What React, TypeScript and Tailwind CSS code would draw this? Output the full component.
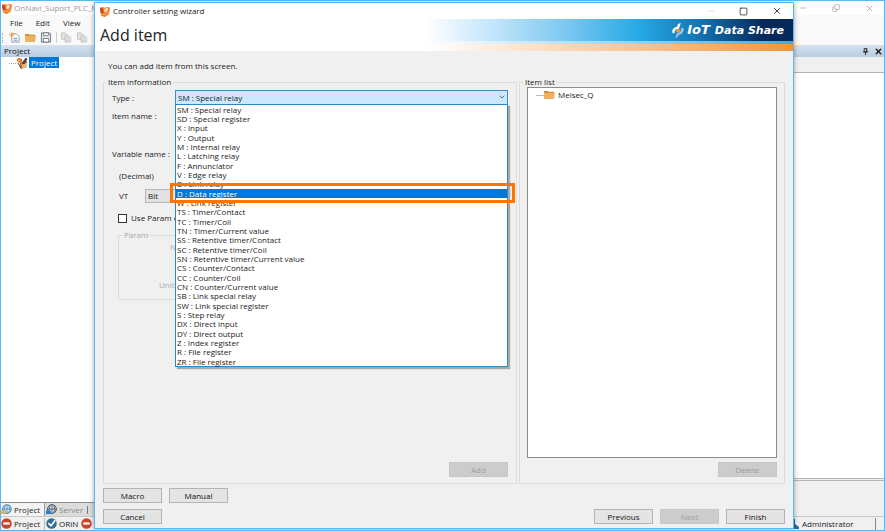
import { useState } from 'react';
import type { ReactNode } from 'react';
import { ChevronDown, Copy, Minus, Square, X } from 'lucide-react';

const ITEM_TYPES = [
  'SM : Special relay',
  'SD : Special register',
  'X : Input',
  'Y : Output',
  'M : Internal relay',
  'L : Latching relay',
  'F : Annunciator',
  'V : Edge relay',
  'B : Link relay',
  'D : Data register',
  'W : Link register',
  'TS : Timer/Contact',
  'TC : Timer/Coil',
  'TN : Timer/Current value',
  'SS : Retentive timer/Contact',
  'SC : Retentive timer/Coil',
  'SN : Retentive timer/Current value',
  'CS : Counter/Contact',
  'CC : Counter/Coil',
  'CN : Counter/Current value',
  'SB : Link special relay',
  'SW : Link special register',
  'S : Step relay',
  'DX : Direct input',
  'DY : Direct output',
  'Z : Index register',
  'R : File register',
  'ZR : File register',
];

function AppIcon() {
  return (
    <svg viewBox="0 0 12 12" className="h-[11px] w-[11px] shrink-0">
      <path d="M1 2l3-1 2 1 4-1 2 1-1 7-5 3-4-2z" fill="#ee7a2b" />
      <path d="M1 2l3 1 1 5-3-1z" fill="#c7401a" />
      <path d="M6 3l4-1-1 4-3 1z" fill="#fde0bd" />
      <path d="M2 8l4 1 5-3v3l-5 3-4-2z" fill="#f8ab5a" />
      <path d="M3 10l3 1 4-3" fill="none" stroke="#d4541c" strokeWidth=".8" />
    </svg>
  );
}

function ProjectIcon() {
  return (
    <svg viewBox="0 0 12 12" className="h-[12px] w-[12px] shrink-0">
      <path d="M4 6l7-2v6l-6 2-1-1z" fill="#b5793f" />
      <path d="M6 7l5-1v4l-5 1z" fill="#eab676" />
      <path d="M1 2l2-1 3 1v3l-2 1-3-2z" fill="#e8681d" />
      <path d="M2 3l2 1" stroke="#ffd9a8" strokeWidth="1" />
      <path d="M6 6l4-5 1 1-3 5zM2 6l3 5" fill="#444" stroke="#5b4636" strokeWidth="1" />
    </svg>
  );
}

function FolderIcon() {
  return (
    <svg viewBox="0 0 12 10" className="h-[9px] w-[11px] shrink-0">
      <path d="M0 1h4l1 1h6v2H0z" fill="#c98a2e" />
      <path d="M0 3h12l-1 7H0z" fill="#f0b062" />
    </svg>
  );
}

function NewIcon() {
  return (
    <svg viewBox="0 0 12 12" className="h-[11px] w-[11px] shrink-0" fill="none">
      <path d="M3 2h5l3 3v6H3z" fill="#fff" stroke="#8a98a6" />
      <path d="M5 7h4M5 9h4" stroke="#4d94c8" />
      <path d="M3 0v6M0 3h6M1 1l4 4M5 1L1 5" stroke="#e9a13b" strokeWidth=".8" />
    </svg>
  );
}

function SaveIcon() {
  return (
    <svg viewBox="0 0 12 12" className="h-[11px] w-[12px] shrink-0" fill="none">
      <path d="M1 1h9l1 1v9H1z" fill="#e9edf0" stroke="#6b7680" />
      <path d="M3 1h6v3H3zM3 7h6v4H3z" fill="#fff" stroke="#6b7680" />
    </svg>
  );
}

function PagesIcon() {
  return (
    <svg viewBox="0 0 12 12" className="h-[11px] w-[12px] shrink-0" fill="#e3e3e3" stroke="#c4c4c4">
      <path d="M1 1h4l2 2v5H1z" />
      <path d="M5 4h4l2 2v5H5z" />
      <path d="M7 7h2M7 9h2" />
    </svg>
  );
}

function GlobeIcon({ color, badge }: { color: string; badge: string }) {
  return (
    <svg viewBox="0 0 12 12" className="h-[11px] w-[11px] shrink-0" fill="none">
      <circle cx="6.500" cy="5.500" r="4.800" fill="#dceaf4" stroke={color} />
      <path d="M6.500 1v9M2 5.500h9M4.500 1.500q-2 4 0 8M8.500 1.500q2 4 0 8" stroke={color} strokeWidth=".8" />
      <path d="M0 7h5v4H0z" fill={badge} />
    </svg>
  );
}

function StopIcon() {
  return (
    <svg viewBox="0 0 12 12" className="h-[11px] w-[11px] shrink-0">
      <circle cx="6" cy="6" r="5.700" fill="#c7452b" />
      <path d="M2.500 4.800h7v2.400h-7z" fill="#fff" />
    </svg>
  );
}

function CheckIcon() {
  return (
    <svg viewBox="0 0 12 12" className="h-[11px] w-[11px] shrink-0" fill="none">
      <circle cx="6" cy="6" r="5.700" fill="#2f6f96" />
      <path d="M2.500 5.500L5.500 8.500L10 2.500" stroke="#fff" strokeWidth="1.800" />
    </svg>
  );
}

function PinIcon() {
  return (
    <svg viewBox="0 0 8 8" className="h-[7px] w-[7px]" fill="none" stroke="#222">
      <path d="M2.500.5h3v4h-3zM1 4.500h6M4 4.500V8M5 1v3" />
    </svg>
  );
}

function ShareMark() {
  return (
    <svg viewBox="0 0 14 16" className="h-[15px] w-[14px] shrink-0">
      <path d="M10 0L8 6Q4 6 3.500 9L3 11Q0 11 1 8Q2 4.500 6 4L7 1z" fill="#fff" />
      <path d="M4 16l2-5Q9 11 10 8L10.500 5Q14 5 13 8Q12 12 8 12.500L6.500 15z" fill="#9fc3e0" />
      <circle cx="7" cy="8.300" r="2.200" fill="#f39a2d" />
    </svg>
  );
}

function PushButton({ children, disabled }: { children: ReactNode; disabled?: boolean }) {
  return (
    <button
      type="button"
      disabled={disabled}
      className="h-[15px] w-[59px] border border-[#b4b4b4] bg-[#e4e4e4] text-center leading-[12px] text-[#111] disabled:border-[#c6c6c6] disabled:bg-[#cccccc] disabled:text-[#a0a0a0]"
    >
      {children}
    </button>
  );
}

function MainWindow() {
  return (
    <div className="flex h-full flex-col bg-[#f0f0f0]">
      <header className="flex h-[14px] items-center bg-white text-[#9a9a9a]">
        <AppIcon />
        <span className="ml-[2px] flex-1 whitespace-nowrap">OnNavi_Suport_PLC_M</span>
        <div className="flex items-center gap-[25px] pr-[10px]">
          <button type="button" aria-label="Minimize"><Minus size={8} strokeWidth={2} /></button>
          <button type="button" aria-label="Restore"><Copy size={8} strokeWidth={2} className="-scale-y-100" /></button>
          <button type="button" aria-label="Close"><X size={9} strokeWidth={2} /></button>
        </div>
      </header>
      <nav className="flex h-[15px] items-center gap-[13px] bg-[#f9f9fa] pl-[9px] text-[#222]">
        <button type="button">File</button>
        <button type="button">Edit</button>
        <button type="button">View</button>
      </nav>
      <div className="flex h-[15px] items-center bg-[#f9f9fa] pl-px">
        <span className="h-[10px] border-l border-dotted border-[#aaa]" />
        <button type="button" aria-label="New" className="ml-[6px]"><NewIcon /></button>
        <button type="button" aria-label="Open" className="ml-[5px]"><FolderIcon /></button>
        <button type="button" aria-label="Save" className="ml-[4px]"><SaveIcon /></button>
        <span className="ml-[4px] h-[11px] w-px bg-[#d0d0d0]" />
        <button type="button" aria-label="Copy" className="ml-[3px]"><PagesIcon /></button>
        <button type="button" aria-label="Paste" className="ml-[4px]"><PagesIcon /></button>
      </div>

      <div className="flex min-h-0 flex-1">
        <aside className="flex w-[93px] shrink-0 flex-col">
          <h2 className="h-[12px] bg-linear-to-b from-[#d5e1ee] to-[#b9cde0] pl-[3px] leading-[12px] text-[#111]">Project</h2>
          <div className="flex flex-1 items-start bg-white pl-[8px]">
            <span className="mt-[6px] w-[7px] border-t border-dotted border-[#aaa]" />
            <ProjectIcon />
            <span className="ml-px h-[11px] bg-[#0078d7] px-[2px] leading-[11px] text-white">Project</span>
          </div>
          <div className="flex h-[14px] items-center border-t border-[#8c8c8c] bg-[#dcdcdc]">
            <button type="button" className="flex h-full items-center gap-[2px] border-r border-[#999] bg-[#f4f4f4] pr-[4px] text-[#222]">
              <GlobeIcon color="#3b7fae" badge="#e9b05c" />
              Project
            </button>
            <button type="button" className="flex items-center gap-[2px] pl-px text-[#888]">
              <GlobeIcon color="#35424e" badge="#2084cf" />
              Server
            </button>
            <span className="ml-[4px] h-[8px] w-px bg-[#777]" />
          </div>
        </aside>
        <section className="flex flex-1 flex-col">
          <div className="flex h-[12px] items-center justify-end gap-[5px] bg-linear-to-b from-[#d5e1ee] to-[#b9cde0] pr-px">
            <button type="button" aria-label="Pin"><PinIcon /></button>
            <button type="button" aria-label="Close panel"><X size={9} strokeWidth={4} className="text-[#222]" /></button>
          </div>
          <div className="h-[16px] border-b border-[#b4b4b4]" />
          <div className="flex-1 bg-white" />
          <div className="h-[3px] border-y border-[#b4b4b4]" />
          <div className="h-[35px]" />
        </section>
      </div>

      <footer className="flex h-[14px] shrink-0 items-center border-t border-[#c8c8c8] text-[#222]">
        <StopIcon />
        <span className="ml-[2px]">Project</span>
        <span className="ml-[4px] flex items-center gap-[2px] border-l border-[#bbb] pl-px">
          <CheckIcon />
          ORiN
        </span>
        <span className="ml-[3px]"><StopIcon /></span>
        <span className="ml-auto flex w-[92px] items-center gap-[3px]">
          <svg viewBox="0 0 7 10" className="h-[10px] w-[7px]">
            <path d="M0 0h3v5l4 3v2H0z" fill="#2a6f98" />
          </svg>
          Administrator
          <span className="ml-[18px] h-[12px] w-px bg-[#888]" />
        </span>
      </footer>
    </div>
  );
}

function TypeSelect() {
  const [selected, setSelected] = useState('D : Data register');

  return (
    <div className="relative h-[15px] flex-1">
      <select
        id="item-type"
        className="block h-[15px] w-full appearance-none border border-[#3c8dc4] bg-[#cce8ff] pl-[2px] leading-[13px] text-[#222]"
      >
        <option>SM : Special relay</option>
      </select>
      <ChevronDown size={8} className="pointer-events-none absolute top-[3px] right-[2px] text-[#333]" />
      <ul
        role="listbox"
        aria-label="Type"
        className="absolute top-[14px] left-0 z-10 flex h-[263px] w-full flex-col border border-[#2f86c4] bg-white text-[#222] shadow-[2px_2px_1px_#a8a8a8]"
      >
        {ITEM_TYPES.map((type) => (
          <li
            key={type}
            role="option"
            aria-selected={type === selected}
            onClick={() => setSelected(type)}
            className="flex min-h-0 flex-1 items-center pl-px whitespace-nowrap aria-selected:bg-[#0078d7] aria-selected:text-white"
          >
            {type}
          </li>
        ))}
      </ul>
      {/* Callout around the data register row */}
      <div className="pointer-events-none absolute top-[93px] -right-[7px] -left-[5px] z-20 h-[20px] border-[3px] border-[#ff7300]" />
    </div>
  );
}

function ItemInformation() {
  return (
    <fieldset className="flex min-w-0 flex-1 flex-col border border-[#dcdcdc] pr-[8px] pb-[6px] pl-[8px]">
      <legend className="-ml-[6px] h-[10px] px-[2px] leading-[10px]">Item information</legend>
      <div className="mt-[3px] flex items-center">
        <label htmlFor="item-type" className="w-[63px]">Type :</label>
        <TypeSelect />
      </div>
      <div className="mt-[5px] h-[12px] leading-[12px]">Item name :</div>
      <div className="mt-[26px] h-[12px] leading-[12px]">Variable name :</div>
      <div className="mt-[10px] h-[12px] pl-[7px] leading-[12px]">(Decimal)</div>
      <div className="mt-[7px] flex items-center pl-[7px]">
        <label htmlFor="vt" className="w-[26px]">VT</label>
        <select id="vt" className="h-[14px] w-[60px] appearance-none border border-[#b4b4b4] bg-[#e1e1e1] pl-[2px] leading-[12px]">
          <option>Bit</option>
        </select>
      </div>
      <label className="mt-[9px] flex h-[12px] items-center gap-[4px] pl-[6px]">
        <input type="checkbox" className="h-[9px] w-[9px] appearance-none border border-[#333] bg-white" />
        Use Param c
      </label>
      <fieldset disabled className="mt-[6px] ml-[6px] h-[70px] border border-[#dcdcdc] text-[#a8a8a8]">
        <legend className="ml-[3px] h-[10px] px-[2px] leading-[10px]">Param</legend>
        <div className="mt-px h-[12px] pl-[51px] leading-[12px]">N</div>
        <div className="mt-[26px] h-[12px] pl-[40px] leading-[12px]">Unit</div>
      </fieldset>
      <div className="mt-auto flex justify-end">
        <PushButton disabled>Add</PushButton>
      </div>
    </fieldset>
  );
}

function ItemList() {
  return (
    <fieldset className="flex w-[266px] shrink-0 flex-col border border-[#dcdcdc] px-[7px] pb-[6px]">
      <legend className="-ml-[4px] h-[10px] px-[2px] leading-[10px]">Item list</legend>
      <div className="flex flex-1 items-start border border-[#8c8c8c] bg-white pt-px pl-[8px]">
        <span className="mt-[6px] w-[8px] border-t border-[#bbb]" />
        <span className="mt-px"><FolderIcon /></span>
        <span className="ml-[3px] leading-[12px]">Melsec_Q</span>
      </div>
      <div className="mt-[4px] flex justify-end">
        <PushButton disabled>Delete</PushButton>
      </div>
    </fieldset>
  );
}

function WizardDialog() {
  return (
    <div
      role="dialog"
      aria-labelledby="wizard-title"
      className="absolute top-px right-[90px] bottom-px left-[93px] flex flex-col border border-[#57b8f5] bg-[#f0f0f0] text-[#222] shadow-[0_0_5px_rgba(0,0,0,0.35)]"
    >
      <div className="flex h-[16px] shrink-0 items-center bg-white pl-[4px]">
        <AppIcon />
        <span id="wizard-title" className="ml-[3px] flex-1">Controller setting wizard</span>
        <div className="flex items-center gap-[24px] pr-[11px]">
          <button type="button" disabled aria-label="Minimize" className="text-[#ccc]"><Minus size={8} /></button>
          <button type="button" aria-label="Maximize"><Square size={9} /></button>
          <button type="button" aria-label="Close"><X size={10} /></button>
        </div>
      </div>

      <div className="flex h-[32px] shrink-0 bg-white">
        <h1 className="w-[330px] pl-[5px] text-[16px] leading-[32px]">Add item</h1>
        <div className="flex flex-1 flex-col">
          <div className="flex h-[22px] items-center justify-end bg-[linear-gradient(90deg,#fff_0%,#c4e6fa_18%,#7cc9ef_38%,#27a9e5_58%,#1377b5_74%,#06295a_92%)] pr-[9px] font-['DejaVu_Sans'] font-bold text-white italic">
            <ShareMark />
            <span className="ml-[2px] flex items-baseline gap-[5px] whitespace-nowrap">
              <span className="text-[13px]">IoT</span>
              <span className="text-[11px]">Data Share</span>
            </span>
          </div>
          <div className="h-[3px] bg-linear-to-r from-white to-[#35aee8]" />
          <div className="flex-1 bg-linear-to-r from-white to-[#ef9630]" />
        </div>
      </div>

      <div className="flex min-h-0 flex-1 flex-col px-[8px] pb-[4px]">
        <p className="mt-[9px] h-[12px] pl-[5px] leading-[12px]">You can add item from this screen.</p>
        <div className="mt-[5px] flex min-h-0 flex-1 gap-[2px]">
          <ItemInformation />
          <ItemList />
        </div>
        <div className="mt-[4px] flex gap-[7px]">
          <PushButton>Macro</PushButton>
          <PushButton>Manual</PushButton>
        </div>
        <div className="mt-[6px] flex gap-[7px]">
          <PushButton>Cancel</PushButton>
          <div className="flex-1" />
          <PushButton>Previous</PushButton>
          <PushButton disabled>Next</PushButton>
          <PushButton>Finish</PushButton>
        </div>
      </div>
    </div>
  );
}

export default function App() {
  return (
    <main className="relative h-screen overflow-hidden border border-[#57b8f5] font-['Open_Sans',sans-serif] text-[8px] leading-[12px]">
      <MainWindow />
      <WizardDialog />
    </main>
  );
}
